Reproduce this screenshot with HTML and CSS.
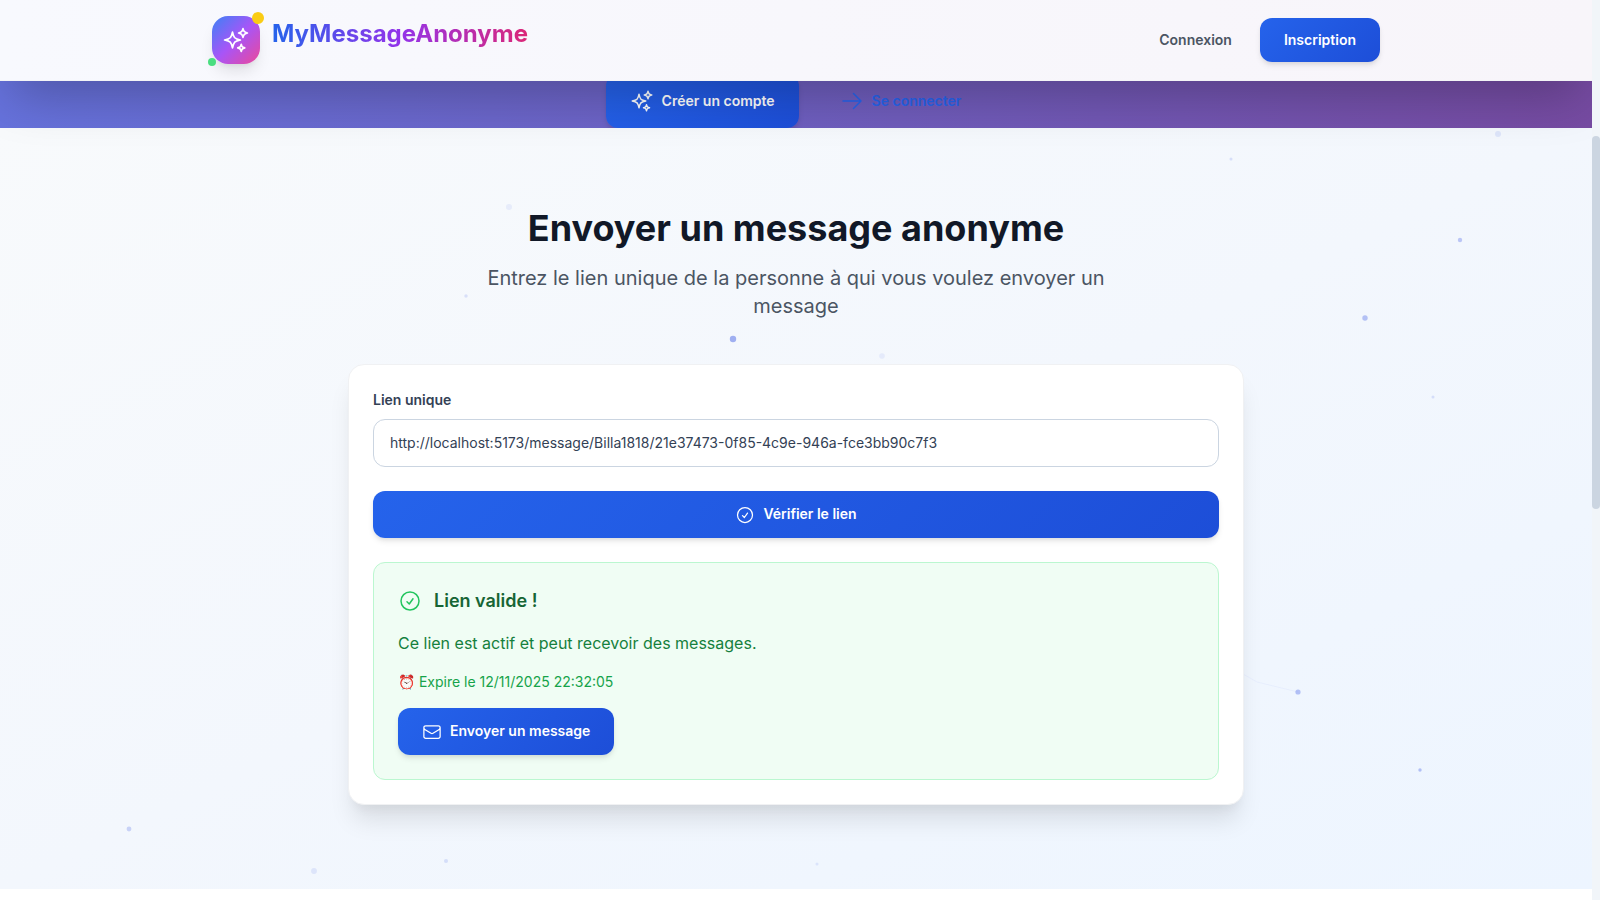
FILE: index.html
```
<!DOCTYPE html>
<html lang="fr">
<head>
  <meta charset="UTF-8">
  <meta name="viewport" content="width=device-width, initial-scale=1.0">
  <title>MyMessageAnonyme</title>
  <link rel="stylesheet" href="styles.css">
</head>
<body>
  <!-- Shared icons -->
  <svg class="sprite" aria-hidden="true">
    <symbol id="i-sparkles" viewBox="0 0 24 24"><path d="M9.813 15.904L9 18.75l-.813-2.846a4.5 4.5 0 00-3.09-3.09L2.25 12l2.846-.813a4.5 4.5 0 003.09-3.09L9 5.25l.813 2.846a4.5 4.5 0 003.09 3.09L15.75 12l-2.846.813a4.5 4.5 0 00-3.09 3.09zM18.259 8.715L18 9.75l-.259-1.035a3.375 3.375 0 00-2.455-2.456L14.25 6l1.036-.259a3.375 3.375 0 002.455-2.456L18 2.25l.259 1.035a3.375 3.375 0 002.456 2.456L21.75 6l-1.035.259a3.375 3.375 0 00-2.456 2.456zM16.894 20.567L16.5 21.75l-.394-1.183a2.25 2.25 0 00-1.423-1.423L13.5 18.75l1.183-.394a2.25 2.25 0 001.423-1.423l.394-1.183.394 1.183a2.25 2.25 0 001.423 1.423l1.183.394-1.183.394a2.25 2.25 0 00-1.423 1.423z"/></symbol>
    <symbol id="i-arrow" viewBox="0 0 24 24"><path d="M13.5 4.5L21 12m0 0l-7.5 7.5M21 12H3"/></symbol>
    <symbol id="i-check" viewBox="0 0 24 24"><path d="M9 12.75L11.25 15 15 9.75M21 12a9 9 0 11-18 0 9 9 0 0118 0z"/></symbol>
    <symbol id="i-mail" viewBox="0 0 24 24"><path d="M21.75 6.75v10.5a2.25 2.25 0 01-2.25 2.25h-15a2.25 2.25 0 01-2.25-2.25V6.75m19.5 0A2.25 2.25 0 0019.5 4.5h-15a2.25 2.25 0 00-2.25 2.25m19.5 0v.243a2.25 2.25 0 01-1.07 1.916l-7.5 4.615a2.25 2.25 0 01-2.36 0L3.32 8.91a2.25 2.25 0 01-1.07-1.916V6.75"/></symbol>
  </svg>

  <div class="page">
    <header class="header">
      <div class="header-inner">
        <a class="brand" href="#">
          <span class="logo">
            <svg class="icon"><use href="#i-sparkles"/></svg>
            <span class="dot dot-yellow"></span>
            <span class="dot dot-green"></span>
          </span>
          <span class="brand-name">MyMessageAnonyme</span>
        </a>
        <nav class="nav">
          <a class="nav-link" href="#">Connexion</a>
          <a class="btn btn-small" href="#">Inscription</a>
        </nav>
      </div>
    </header>

    <section class="hero">
      <a class="btn btn-large" href="#"><svg class="icon"><use href="#i-sparkles"/></svg>Créer un compte</a>
      <a class="btn btn-large btn-ghost" href="#"><svg class="icon"><use href="#i-arrow"/></svg>Se connecter</a>
    </section>

    <main class="send">
      <!-- Floating particles -->
      <svg class="particles" aria-hidden="true">
        <path d="M1236 542L1257 554L1298 564"/>
        <circle cx="1498" cy="6" r="3" opacity=".15"/>
        <circle cx="1231" cy="31" r="1.5" opacity=".2"/>
        <circle cx="509" cy="79" r="3" opacity=".1"/>
        <circle cx="1460" cy="112" r="2.2" opacity=".4"/>
        <circle cx="466" cy="168" r="1.7" opacity=".2"/>
        <circle cx="1365" cy="190" r="2.7" opacity=".45"/>
        <circle cx="733" cy="211" r="3.2" opacity=".6"/>
        <circle cx="882" cy="228" r="2.8" opacity=".1"/>
        <circle cx="1433" cy="269" r="1.5" opacity=".2"/>
        <circle cx="1298" cy="564" r="2.6" opacity=".45"/>
        <circle cx="1420" cy="642" r="1.7" opacity=".45"/>
        <circle cx="129" cy="701" r="2.4" opacity=".3"/>
        <circle cx="446" cy="733" r="2" opacity=".2"/>
        <circle cx="314" cy="743" r="2.9" opacity=".15"/>
        <circle cx="817" cy="736" r="1.5" opacity=".15"/>
      </svg>

      <div class="intro">
        <h1>Envoyer un message anonyme</h1>
        <p>Entrez le lien unique de la personne à qui vous voulez envoyer un message</p>
      </div>

      <form class="card">
        <div class="field">
          <label for="link">Lien unique</label>
          <input id="link" type="text" value="http://localhost:5173/message/Billa1818/21e37473-0f85-4c9e-946a-fce3bb90c7f3">
        </div>
        <button class="btn" type="button"><svg class="icon icon-small"><use href="#i-check"/></svg>Vérifier le lien</button>
        <div class="result">
          <h2><svg class="icon"><use href="#i-check"/></svg>Lien valide !</h2>
          <p class="result-text">Ce lien est actif et peut recevoir des messages.</p>
          <p class="result-date">⏰ Expire le 12/11/2025 22:32:05</p>
          <button class="btn" type="button"><svg class="icon icon-small"><use href="#i-mail"/></svg>Envoyer un message</button>
        </div>
      </form>
    </main>
  </div>

  <div class="scrollbar" aria-hidden="true"><div class="scrollbar-thumb"></div></div>
</body>
</html>
```
FILE: styles.css
```
/* Basic reset */
* { margin: 0; padding: 0; box-sizing: border-box; }
body {
  display: grid;
  grid-template-columns: 1fr 8px;
  min-height: 100vh;
  font-family: Inter, "Liberation Sans", sans-serif;
  font-size: 14px;
  line-height: 22px;
  color: #334155;
  background: #fff;
}
a { color: inherit; text-decoration: none; }
.sprite { position: absolute; width: 0; height: 0; }
.page { position: relative; min-width: 0; overflow: hidden; }

.icon {
  width: 24px; height: 24px; flex: none;
  fill: none; stroke: currentColor; stroke-width: 1.5;
  stroke-linecap: round; stroke-linejoin: round;
}
.icon-small { width: 20px; height: 20px; }

/* Buttons */
.btn {
  display: inline-flex; align-items: flex-end; justify-content: center; gap: 8px;
  padding: 12px 24px 13px;
  border: 0; border-radius: 12px;
  font: inherit; font-weight: 600; color: #fff;
  background: linear-gradient(135deg, #2563eb, #1d4ed8);
  box-shadow: 0 4px 6px -1px rgba(0,0,0,0.1), 0 2px 4px -1px rgba(0,0,0,0.06);
  cursor: pointer;
}
.btn-small { padding: 12px 24px; line-height: 20px; }
.btn-large { align-items: center; padding: 15px 24px; }
.btn-ghost { padding: 14px 24px; border: 1px solid transparent; background: none; box-shadow: none; color: #2563eb; }

/* Header */
.header {
  position: absolute; top: 0; left: 0; right: 0; z-index: 10;
  border-bottom: 1px solid #f3f4f6;
  background: linear-gradient(90deg, #f8f9fe, #f8f5fa);
  box-shadow: 0 25px 50px -12px rgba(0,0,0,0.25);
}
.header-inner {
  display: flex; align-items: center; justify-content: space-between;
  max-width: 1200px; margin: 0 auto; padding: 16px;
}
.brand { display: flex; gap: 12px; }
.logo {
  position: relative;
  display: flex; align-items: center; justify-content: center;
  width: 48px; height: 48px; border-radius: 16px;
  color: #fff;
  background: linear-gradient(135deg, #3b82f6, #a855f7, #ec4899);
  box-shadow: 0 10px 15px -3px rgba(0,0,0,0.1), 0 4px 6px -4px rgba(0,0,0,0.1);
}
.logo .icon { width: 28px; height: 28px; }
.dot { position: absolute; border-radius: 50%; }
.dot-yellow { top: -4px; right: -4px; width: 12px; height: 12px; background: #facc15; }
.dot-green { bottom: -2px; left: -4px; width: 8px; height: 8px; background: #4ade80; }
.brand-name {
  align-self: flex-start;
  font-size: 24px; line-height: 36px; font-weight: 700;
  color: transparent;
  background: linear-gradient(90deg, #2563eb, #9333ea, #db2777);
  -webkit-background-clip: text; background-clip: text;
}
.nav { display: flex; align-items: center; gap: 28px; }
.nav-link { font-weight: 600; color: #4b5563; }

/* Hero */
.hero {
  display: flex; justify-content: center; gap: 16px;
  padding-top: 74px;
  background: linear-gradient(90deg, #6672dc, #764ba2);
}

/* Send form */
.send {
  position: relative;
  padding: 80px 16px 84px;
  background: linear-gradient(to bottom right, #f8fafc, #f3f7fd 50%, #edf5ff);
}
.particles { position: absolute; top: 0; left: 0; width: 100%; height: 100%; fill: #667eea; }
.particles path { fill: none; stroke: #667eea; opacity: 0.06; }
.intro { position: relative; max-width: 672px; margin: 0 auto 44px; text-align: center; }
.intro h1 { margin-bottom: 16px; font-size: 36px; line-height: 40px; font-weight: 700; color: #111827; }
.intro p { font-size: 20px; line-height: 28px; color: #4b5563; }

.card {
  position: relative;
  display: flex; flex-direction: column; gap: 24px;
  max-width: 896px; margin: 0 auto; padding: 24px;
  border: 1px solid #f0f1f3; border-radius: 16px;
  background: #fff;
  box-shadow: 0 20px 25px -5px rgba(0,0,0,0.1), 0 10px 10px -5px rgba(0,0,0,0.04);
}
.field { display: flex; flex-direction: column; gap: 8px; }
.field label { font-weight: 600; }
.field input {
  width: 100%; height: 48px; padding: 0 16px 1px;
  border: 1px solid #cbd5e1; border-radius: 12px;
  font: inherit; color: #334155; background: #fff;
}

.result {
  display: flex; flex-direction: column; align-items: flex-start; gap: 16px;
  padding: 24px;
  border: 1px solid #bbf7d0; border-radius: 12px;
  background: #f0fdf4;
}
.result h2 {
  display: flex; align-items: center; gap: 12px;
  font-size: 18px; line-height: 28px; font-weight: 600; color: #166534;
}
.result h2 .icon { color: #22c55e; }
.result-text { font-size: 16px; line-height: 24px; color: #15803d; }
.result-date { line-height: 21px; color: #16a34a; }

/* Scrollbar */
.scrollbar { display: flow-root; background: #f1f5f9; }
.scrollbar-thumb { height: 373px; margin-top: 136px; border-radius: 4px; background: #cbd5e1; }
```
